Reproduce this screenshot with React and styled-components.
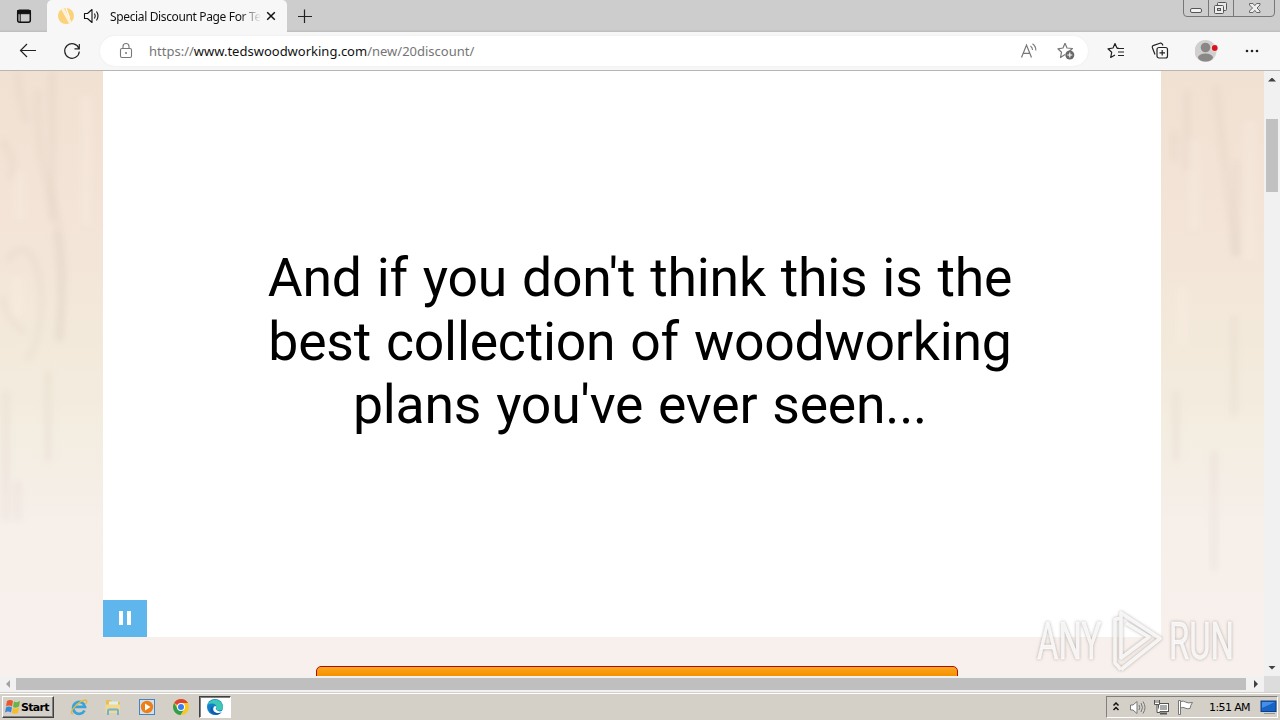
import React from 'react';
import styled, { createGlobalStyle } from 'styled-components';

const GlobalStyle = createGlobalStyle`
  * {
    box-sizing: border-box;
  }

  body {
    margin: 0;
    overflow: hidden;
    font-family: 'Noto Sans', 'Open Sans', sans-serif;
  }

  svg {
    display: block;
    flex: none;
  }
`;

const TabStrip = () => (
  <Strip>
    <Slot $w={47}>
      <svg width="16" height="16" viewBox="0 0 16 16">
        <rect x="1.7" y="2.2" width="12.6" height="12" rx="2" fill="none" stroke="#111" strokeWidth="1.5" />
        <path d="M1.5 2.5h13v3.2h-13zM4.2 5v9" fill="#111" stroke="#111" />
      </svg>
    </Slot>
    <Tab>
      <svg width="18" height="18" viewBox="0 0 18 18">
        <circle cx="9" cy="9" r="8" fill="#fbd27a" />
        <path d="M5 .8 13.5 16" stroke="#fdf3dc" strokeWidth="3" />
        <path d="M9 1 12.5 11" stroke="#fff" strokeWidth="1.2" />
      </svg>
      <Speaker width="18" height="16" viewBox="0 0 18 16">
        <path d="M1.5 5.5h3L9 1.5v13l-4.5-4h-3z" fill="none" stroke="#111" strokeWidth="1.1" strokeLinejoin="round" />
        <path d="M11.5 5.5q1.5 2.5 0 5M13.5 3.5q3 4.5 0 9" fill="none" stroke="#111" strokeWidth="1.1" />
      </Speaker>
      <TabTitle>Special Discount Page For Te</TabTitle>
      <CloseIcon width="10" height="10" viewBox="0 0 10 10">
        <path d="M1.2 1.2 8.8 8.8M8.8 1.2 1.2 8.8" stroke="#111" strokeWidth="1.5" />
      </CloseIcon>
    </Tab>
    <Slot $w={35}>
      <svg width="16" height="16" viewBox="0 0 16 16">
        <path d="M1 8.5h14M7.500 1.500v13.500" stroke="#222" strokeWidth="1.2" />
      </svg>
    </Slot>
    <WindowButtons>
      <svg width="94" height="18" viewBox="0 0 94 18">
        <path d="M1.5 0v13q0 3.5 3.5 3.5h84q3.5 0 3.500-3.500V0M26.500 0v16M51.500 0v16" fill="none" stroke="#777" />
        <rect x="8.5" y="8.5" width="11" height="4" rx="1.5" fill="#f2f2f2" stroke="#555" />
        <rect x="35.500" y="2.500" width="9" height="8" rx="1" fill="#e8e8e8" stroke="#555" />
        <rect x="32.500" y="5.500" width="9" height="8" rx="1" fill="#eee" stroke="#555" />
        <rect x="35.500" y="8.500" width="3" height="2" fill="#ccc" stroke="#555" />
        <path d="M67.500 3.500h3.500l1.800 2.200 1.800-2.200h3.400v1.500l-3 3 3 3v1.500h-3.500l-1.700-2.200-1.800 2.200h-3.500V11l3-3-3-3z" fill="#eee" stroke="#666" />
      </svg>
    </WindowButtons>
  </Strip>
);

const Toolbar = () => (
  <Bar>
    <Slot $w={56}>
      <svg width="18" height="16" viewBox="0 0 18 16">
        <path d="M17 7.500H1.500M8 1 1.500 7.500 8 14" fill="none" stroke="#222" strokeWidth="1.2" />
      </svg>
    </Slot>
    <Slot $w={32}>
      <svg width="18" height="18" viewBox="0 0 18 18">
        <path d="M15.900 6.500A7.300 7.300 0 1 0 16.300 9.500M16.300 2v4.800h-4.800" fill="none" stroke="#222" strokeWidth="1.2" />
      </svg>
    </Slot>
    <AddressBar>
      <LockSlot $w={49}>
        <svg width="14" height="18" viewBox="0 0 14 18">
          <rect x="1.5" y="6.5" width="11" height="9" rx="1.5" fill="none" stroke="#777" strokeWidth="1.1" />
          <path d="M4 6.500V4.500a3 3 0 0 1 6 0v2" fill="none" stroke="#777" strokeWidth="1.1" />
          <circle cx="7" cy="11" r="1" fill="#777" />
        </svg>
      </LockSlot>
      <Url>https://<b>www.tedswoodworking.com</b>/new/20discount/</Url>
      <Slot $w={37}>
        <svg width="18" height="16" viewBox="0 0 18 16">
          <path d="M1.500 14.500 6.500 2l5 12.500M3.300 10.300h6.400" fill="none" stroke="#777" strokeWidth="1.2" />
          <path d="M10.500 3q2 1.500 2 4M12.500.800q3.500 2.400 3.300 6.700" fill="none" stroke="#777" strokeWidth="1.1" />
        </svg>
      </Slot>
      <Slot $w={37}>
        <svg width="18" height="18" viewBox="0 0 18 18">
          <path d="M8 1.200 10 6l5.500.5L12 9.500M8 12.500 3.500 15.500l1-5.200L.9 6.800 6 6l2-4.800" fill="none" stroke="#777" strokeWidth="1.2" strokeLinejoin="round" />
          <circle cx="12.800" cy="13" r="4.500" fill="#686868" />
          <path d="M10.300 13h5M12.800 10.500v5" stroke="#fff" strokeWidth="1.1" />
        </svg>
      </Slot>
    </AddressBar>
    <Slot $w={56}>
      <svg width="18" height="18" viewBox="0 0 18 18">
        <path d="M11.500 6.200 9.900 6 8 1.500 6 6 1 6.800l3.700 3.500-1 5.200L8 13" fill="none" stroke="#222" strokeWidth="1.2" strokeLinejoin="round" />
        <path d="M10 6.500h7M11 10h6M11 13.500h6" stroke="#222" strokeWidth="1.2" />
      </svg>
    </Slot>
    <Slot $w={32}>
      <svg width="18" height="18" viewBox="0 0 18 18">
        <rect x="6" y="5.500" width="10.500" height="10.500" rx="2" fill="none" stroke="#222" strokeWidth="1.2" />
        <path d="M11.200 8v5.500M8.500 10.800H14" stroke="#222" strokeWidth="1.2" />
        <path d="M4 12.500 1.500 6q-.7-2 1.200-2.600L9 1.200q1.800-.5 2.500 1.300l.4 1" fill="none" stroke="#222" strokeWidth="1.2" />
      </svg>
    </Slot>
    <Slot $w={61}>
      <svg width="24" height="24" viewBox="0 0 24 24">
        <circle cx="10.500" cy="12" r="11" fill="#d2d0ce" />
        <circle cx="10.500" cy="8.500" r="4.800" fill="#8a8886" />
        <ellipse cx="10.500" cy="18.500" rx="7.500" ry="4" fill="#8a8886" />
        <circle cx="19.700" cy="9" r="3.600" fill="#ececec" />
        <circle cx="19.700" cy="9" r="2.900" fill="#d9141e" />
      </svg>
    </Slot>
    <Slot $w={30}>
      <svg width="14" height="4" viewBox="0 0 14 4">
        <circle cx="2" cy="2" r="1.300" fill="#222" />
        <circle cx="7" cy="2" r="1.300" fill="#222" />
        <circle cx="12" cy="2" r="1.300" fill="#222" />
      </svg>
    </Slot>
  </Bar>
);

const WoodGrain = () => (
  <Grain width="1264" height="605" viewBox="0 0 1264 605" fill="none">
    <g stroke="#a09078" strokeOpacity=".06">
      <path d="M17 0q4 32 10 52M2 70q16 20 8 38M38 20q-2 60 14 110t8 140" strokeWidth="7" />
      <path d="M6 190q20-24 30 4t2 70q-6 22-12 24M2 225q4 24 24 38" strokeWidth="6" />
      <path d="M52 0v150M56 160q8 50 2 110M48 300v90M6 320v130M18 410v40" strokeWidth="8" />
      <path d="M1187 20v80M1174 60v30M1216 15q4 40 8 70t12 100" strokeWidth="8" />
      <path d="M1236 90v95M1234 245v100M1176 320v70M1214 380v120" strokeWidth="8" />
    </g>
    <g stroke="#fff6ec" strokeOpacity=".2">
      <path d="M20 100v50M86 25v130M18 205v40M1194 70v90M1250 50v140M1182 215v60" strokeWidth="12" />
    </g>
  </Grain>
);

const Watermark = () => (
  <Mark>
    <span>ANY</span>
    <svg width="56" height="64" viewBox="0 0 56 64">
      <path d="M14 9 8 10.500V54l6 6.500M14 60.500 53 29.500 14 4v45l28-21-23-14" fill="none" stroke="#fff" strokeOpacity=".85" strokeWidth="3.600" strokeLinejoin="round" />
    </svg>
    <span>RUN</span>
  </Mark>
);

const Taskbar = () => (
  <TaskbarWrap>
    <StartButton>
      <svg width="16" height="16" viewBox="0 0 16 16">
        <path d="M2 2q3-2 6 0L7 7.500q-3-2-6 0z" fill="#e8582a" />
        <path d="M9 2.500q3 1.500 6-.5L14 7.500q-3 2-6 .5z" fill="#6db344" />
        <path d="M1 8.500q3-2 6 0l-1 5q-3-2-6 0z" fill="#3a86d8" />
        <path d="M8 9q3 1.500 6-.5l-1 5.500q-3 1.500-6 0z" fill="#f7bd25" />
      </svg>
      Start
    </StartButton>
    <Launcher>
      <svg width="18" height="18" viewBox="0 0 18 18">
        <path d="M14.500 12.500A6 6 0 1 1 15 8.800H4" fill="none" stroke="#36a3dc" strokeWidth="2.700" />
        <path d="M3 16Q-1 15 5 8.500T16 2q2 1-.5 4" fill="none" stroke="#e5b83c" strokeWidth="1.3" />
      </svg>
      <svg width="18" height="18" viewBox="0 0 18 18">
        <path d="M2 2h5l1 2h8v10H2z" fill="#e6bf55" />
        <path d="M5 3.500h9V8H5z" fill="#dff0e8" />
        <path d="M1.500 6.500h14.500v8.500H1.500z" fill="#f3d98e" />
        <path d="M4 17v-4.500q0-1 1-1h8q1 0 1 1V17" fill="none" stroke="#6fb4d6" strokeWidth="2" />
      </svg>
      <svg width="18" height="18" viewBox="0 0 18 18">
        <rect x="1.500" y="1.500" width="15" height="15" fill="#cfe2f3" stroke="#4584bd" />
        <circle cx="9" cy="9" r="6.200" fill="#ee7f16" />
        <path d="M7 5.500 12.500 9 7 12.500z" fill="#fff" />
      </svg>
      <svg width="18" height="18" viewBox="0 0 18 18">
        <circle cx="9" cy="9" r="8" fill="#f7c821" />
        <path d="M9 9 2.100 5A8 8 0 0 1 16 5H9z" fill="#df4333" />
        <path d="M2.100 5A8 8 0 0 0 8.500 17L12.200 11 5.600 11z" fill="#2f9f52" />
        <circle cx="9" cy="9" r="4" fill="#fff" />
        <circle cx="9" cy="9" r="3" fill="#3c7ded" />
      </svg>
    </Launcher>
    <ActiveTask>
      <svg width="18" height="18" viewBox="0 0 18 18">
        <circle cx="9" cy="9" r="8" fill="#1380cd" />
        <path d="M1.500 7A8 8 0 0 1 17 9q0 3.500-4 3.500-3.500 0-2.500-2.500Q11 6 6.500 5.500 3 5 1.500 7z" fill="#3cc8b4" />
        <path d="M6.500 8q-1 6 5 7 2.500.3 4.500-1-3 4-8 2.500T4.500 11Q4.500 9 6.500 8z" fill="#115da9" />
        <path d="M10.800 9q-2 1-.3 3 2.500 2.500 6 .8l-.6 1.200q-3 1.500-5.500.7-3.400-1.200-3.200-4Q7.500 8.500 9 8z" fill="#fff" />
      </svg>
    </ActiveTask>
    <Tray>
      <Slot $w={18}>
        <svg width="8" height="10" viewBox="0 0 8 10">
          <path d="M1.500 3.500 4 1 6.500 3.500M1.500 8 4 5.500l2.500 2.500" fill="none" stroke="#111" strokeWidth="1.5" />
        </svg>
      </Slot>
      <Slot $w={24}>
        <svg width="17" height="15" viewBox="0 0 17 15">
          <path d="M1.500 5h2.500l4-3.500v12L4 10H1.500z" fill="#fff" stroke="#777" />
          <path d="M10 5q1.500 2.500 0 5M12 3q3 4.500 0 9M14 1.500q4 6 0 12" fill="none" stroke="#777" />
        </svg>
      </Slot>
      <Slot $w={25}>
        <svg width="17" height="17" viewBox="0 0 17 17">
          <rect x="5.500" y="4.500" width="10" height="8" fill="#aaa" stroke="#555" />
          <rect x="6.500" y="5.500" width="8" height="6" fill="none" stroke="#fff" />
          <path d="M7 14.500h7" stroke="#555" strokeWidth="2" />
          <path d="M1.500 1v4.500h5V1M4 5.500v8h3M3 1v3M5 1v3" fill="#fff" stroke="#555" />
        </svg>
      </Slot>
      <Slot $w={22}>
        <svg width="17" height="17" viewBox="0 0 17 17">
          <path d="M1.500 1.500h2v14h-2z" fill="#fff" stroke="#777" />
          <path d="M3.500 2.500q3-1 5 .5t7 .5q-2 2.500-2.500 6-3 .7-5-.5t-4.500 0z" fill="#fff" stroke="#777" />
        </svg>
      </Slot>
      <Clock>1:51 AM</Clock>
      <svg width="17" height="15" viewBox="0 0 17 15">
        <rect x="1" y="1" width="15" height="10.500" fill="#1763c6" stroke="#0d3f87" />
        <path d="M2 2h13L2 8z" fill="#458fe6" />
        <path d="M4 13.500h11" stroke="#8996a5" />
      </svg>
    </Tray>
  </TaskbarWrap>
);

const App = () => {
  return (
    <Screen>
      <GlobalStyle />
      <TabStrip />
      <Toolbar />
      <Viewport>
        <Page>
          <WoodGrain />
          <Video>
            <Caption>
              <span>And if you don't think this is the</span>
              <span>best collection of woodworking</span>
              <span>plans you've ever seen...</span>
            </Caption>
            <PauseButton>
              <i />
              <i />
            </PauseButton>
          </Video>
          <OrderBox />
          <Watermark />
        </Page>
        <VerticalScroll>
          <Arrow $dir="up" />
          <Thumb />
          <Arrow $dir="down" />
        </VerticalScroll>
      </Viewport>
      <HorizontalScroll>
        <Arrow $dir="left" />
        <HThumb />
        <Arrow $dir="right" />
        <Corner />
      </HorizontalScroll>
      <Taskbar />
    </Screen>
  );
};

export default App;

const Screen = styled.div`
  display: flex;
  flex-direction: column;
  width: 1280px;
  height: 720px;
  overflow: hidden;
  background-color: #f7f7f7;
`;

const Slot = styled.div`
  display: flex;
  flex: none;
  align-items: center;
  justify-content: center;
  width: ${(props) => props.$w}px;
`;

const LockSlot = styled(Slot)`
  padding-left: 3px;
`;

const Strip = styled.div`
  display: flex;
  flex: none;
  height: 32px;
  background: linear-gradient(#cdcdcd 0 29px, #c5c5c5 31px, #b9b9b9 32px);
`;

const Tab = styled.div`
  display: flex;
  align-items: center;
  width: 240px;
  padding-left: 10px;
  border-radius: 5px 5px 0 0;
  background-color: #f7f7f7;
`;

const Speaker = styled.svg`
  margin-left: 8px;
`;

const TabTitle = styled.div`
  flex: none;
  width: 156px;
  margin-left: 9px;
  margin-right: -7px;
  color: #111;
  font-size: 12px;
  letter-spacing: -0.36px;
  white-space: nowrap;
  mask-image: linear-gradient(to right, #000 130px, transparent 151px);
`;

const CloseIcon = styled.svg`
  margin-left: 7px;
`;

const WindowButtons = styled.div`
  margin-left: auto;
  margin-right: 4px;
`;

const Bar = styled.div`
  display: flex;
  flex: none;
  height: 39px;
  padding-bottom: 1px;
  align-items: center;
  border-bottom: 1px solid #b8b6b5;
  background-color: #f7f7f7;

  & > div:nth-child(2) {
    margin-right: 12px;
  }
`;

const AddressBar = styled.div`
  display: flex;
  align-items: center;
  width: 988px;
  height: 30px;
  padding-right: 4px;
  border-radius: 15px;
  background-color: white;
  box-shadow: 0 0 2px #e6e6e6;
`;

const Url = styled.div`
  flex: 1;
  color: #757575;
  font-size: 13px;
  letter-spacing: 0;
  white-space: nowrap;

  b {
    color: #111;
    font-weight: 400;
  }
`;

const Viewport = styled.div`
  display: flex;
  flex: none;
  height: 605px;
`;

const Page = styled.div`
  position: relative;
  width: 1264px;
  overflow: hidden;
  background: linear-gradient(#f1e1d3 0, #f3e4d7 150px, #f3e8da 240px, #f3ecde 330px, #f5eee5 400px, #f6efea 450px, #f8f0ec 605px);
`;

const Grain = styled.svg`
  position: absolute;
  top: 0;
  left: 0;
  filter: blur(3px);
`;

const Video = styled.div`
  position: relative;
  display: flex;
  flex-direction: column;
  justify-content: space-between;
  width: 1058px;
  height: 566px;
  margin-left: 103px;
  background-color: white;
`;

const Caption = styled.div`
  display: flex;
  flex-direction: column;
  align-items: center;
  padding: 175px 0 0 16px;
  color: #000;
  font-family: Roboto, sans-serif;
  font-size: 53.5px;
  line-height: 63.5px;
  letter-spacing: -0.2px;
  word-spacing: 1.8px;
  white-space: nowrap;
`;

const PauseButton = styled.div`
  display: flex;
  align-items: center;
  justify-content: center;
  gap: 4px;
  width: 44px;
  height: 37px;
  padding-bottom: 1px;
  background-color: #5eb6ed;

  i {
    width: 4px;
    height: 14px;
    background-color: white;
  }
`;

const OrderBox = styled.div`
  position: relative;
  width: 642px;
  height: 40px;
  margin: 29px 0 0 316px;
  border: 1px solid #a90d0d;
  border-radius: 5px;
  background: linear-gradient(#fba51f, #f59402 8px);
`;

const Mark = styled.div`
  position: absolute;
  top: 537px;
  left: 1037px;
  display: flex;
  align-items: center;
  width: 200px;
  color: rgba(255, 255, 255, 0.85);
  font-family: Roboto, sans-serif;
  font-size: 51px;
  line-height: 64px;
  filter: drop-shadow(0 0 1.5px rgba(90, 75, 70, 0.5));

  span {
    flex: none;
    width: 90px;
    margin-right: -22px;
    padding-top: 2px;
    transform: scaleX(0.645);
    transform-origin: left;
    -webkit-text-stroke: 0.5px rgba(255, 255, 255, 0.85);
  }

  svg {
    margin: 0 6px 0 2px;
  }
`;

const VerticalScroll = styled.div`
  display: flex;
  flex-direction: column;
  align-items: center;
  width: 16px;
  background-color: #f1f1f1;
`;

const arrowClips = {
  up: 'polygon(50% 0, 100% 100%, 0 100%)',
  down: 'polygon(0 0, 100% 0, 50% 100%)',
  left: 'polygon(100% 0, 100% 100%, 0 50%)',
  right: 'polygon(0 0, 100% 50%, 0 100%)',
};

const Arrow = styled.div`
  display: flex;
  flex: none;
  align-items: center;
  justify-content: center;
  width: 16px;
  height: 17px;

  &::before {
    content: '';
    width: ${(props) => (props.$dir === 'up' || props.$dir === 'down' ? 8 : 4)}px;
    height: ${(props) => (props.$dir === 'up' || props.$dir === 'down' ? 4 : 8)}px;
    background-color: ${(props) => (props.$dir === 'left' ? '#a3a3a3' : '#404040')};
    clip-path: ${(props) => arrowClips[props.$dir]};
  }
`;

const Thumb = styled.div`
  width: 12px;
  height: 73px;
  margin: 31px 0 auto;
  background-color: #c1c1c1;
`;

const HorizontalScroll = styled.div`
  display: flex;
  flex: none;
  align-items: center;
  height: 16px;
  background-color: #f1f1f1;
`;

const HThumb = styled.div`
  width: 1230px;
  height: 12px;
  background-color: #bfbfbf;

  & + div {
    margin-left: 2px;
  }
`;

const Corner = styled.div`
  flex: 1;
  align-self: stretch;
  background-color: #dcdcdc;
`;

const TaskbarWrap = styled.div`
  display: flex;
  flex: none;
  height: 28px;
  padding: 1px 0 0 2px;
  align-items: center;
  border-top: 1px solid #d4d0c8;
  background-color: #d4d0c8;
  box-shadow: inset 0 1px #fff;
`;

const StartButton = styled.div`
  display: flex;
  align-items: center;
  gap: 0;
  width: 52px;
  height: 22px;
  padding-left: 2px;
  border: 1px solid;
  border-color: #fff #404040 #404040 #fff;
  box-shadow: inset -1px -1px #808080;
  font-family: 'DejaVu Sans', sans-serif;
  font-size: 11px;
  font-weight: 700;
  letter-spacing: -0.7px;
`;

const Launcher = styled.div`
  display: flex;
  gap: 16px;
  margin-left: 16px;
`;

const ActiveTask = styled.div`
  display: flex;
  align-items: center;
  justify-content: center;
  width: 32px;
  height: 22px;
  margin-left: 9px;
  border: 1px solid;
  border-color: #404040 #fff #fff #404040;
  box-shadow: inset 1px 1px #808080;
  background-color: white;
`;

const Tray = styled.div`
  display: flex;
  align-items: center;
  width: 172px;
  height: 22px;
  margin-left: auto;
  margin-right: 2px;
  border: 1px solid;
  border-color: #808080 #fff #fff #808080;
`;

const Clock = styled.div`
  flex: 1;
  padding-left: 3px;
  color: #000;
  font-family: 'DejaVu Sans', sans-serif;
  font-size: 11px;
  letter-spacing: -0.6px;
  text-align: center;
  white-space: nowrap;
`;
